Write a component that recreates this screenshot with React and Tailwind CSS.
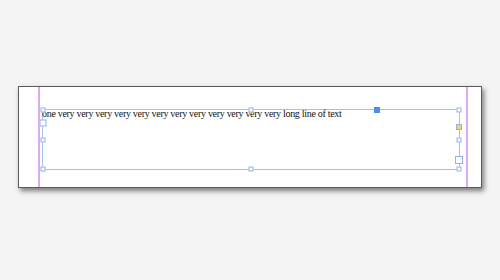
export default function App() {
  const h = "absolute w-[5px] h-[5px] bg-white border border-[#8fb1ea] -translate-x-1/2 -translate-y-1/2";
  return (
    <div className="w-[500px] h-[280px] bg-[#f4f4f4] pt-[86px] pl-[18px]">
      <div className="flex w-[464px] h-[102px] bg-white border border-[#5c5c5c] shadow-[2px_3px_5px_rgba(0,0,0,0.5)] pl-[19px]">
        <div className="w-[2px] bg-[#d9aaf0]" />
        <div className="ml-[2px] mt-[22px] w-[418px] h-[61px] relative border border-[#a4c2f0]">
          <div className="absolute left-[-1px] top-[-3px] whitespace-nowrap text-[10px] leading-[14px] text-[#111] tracking-[-0.3px]" style={{ fontFamily: '"Liberation Serif", serif' }}>
            one very very very very very very very very very very very very long line of text
          </div>
          <div className={h + " left-0 top-0"} />
          <div className={h + " left-1/2 top-0"} />
          <div className={h + " left-full top-0"} />
          <div className={h + " left-0 top-1/2"} />
          <div className={h + " left-full top-1/2"} />
          <div className={h + " left-0 top-full"} />
          <div className={h + " left-1/2 top-full"} />
          <div className={h + " left-full top-full"} />
          <div className="absolute left-0 top-[13px] w-[7px] h-[7px] bg-white border border-[#8fb1ea] -translate-x-1/2 -translate-y-1/2" />
          <div className="absolute left-full top-[17px] w-[6px] h-[6px] bg-[#f1da5a] border border-[#8fb1ea] -translate-x-1/2 -translate-y-1/2" />
          <div className="absolute left-full top-[50px] w-[8px] h-[8px] bg-white border border-[#8fb1ea] -translate-x-1/2 -translate-y-1/2" />
          <div className="absolute left-[334px] top-0 w-[6px] h-[6px] bg-[#4b8fe8] -translate-x-1/2 -translate-y-1/2" />
        </div>
        <div className="ml-[6px] w-[2px] bg-[#d9aaf0]" />
      </div>
    </div>
  );
}
